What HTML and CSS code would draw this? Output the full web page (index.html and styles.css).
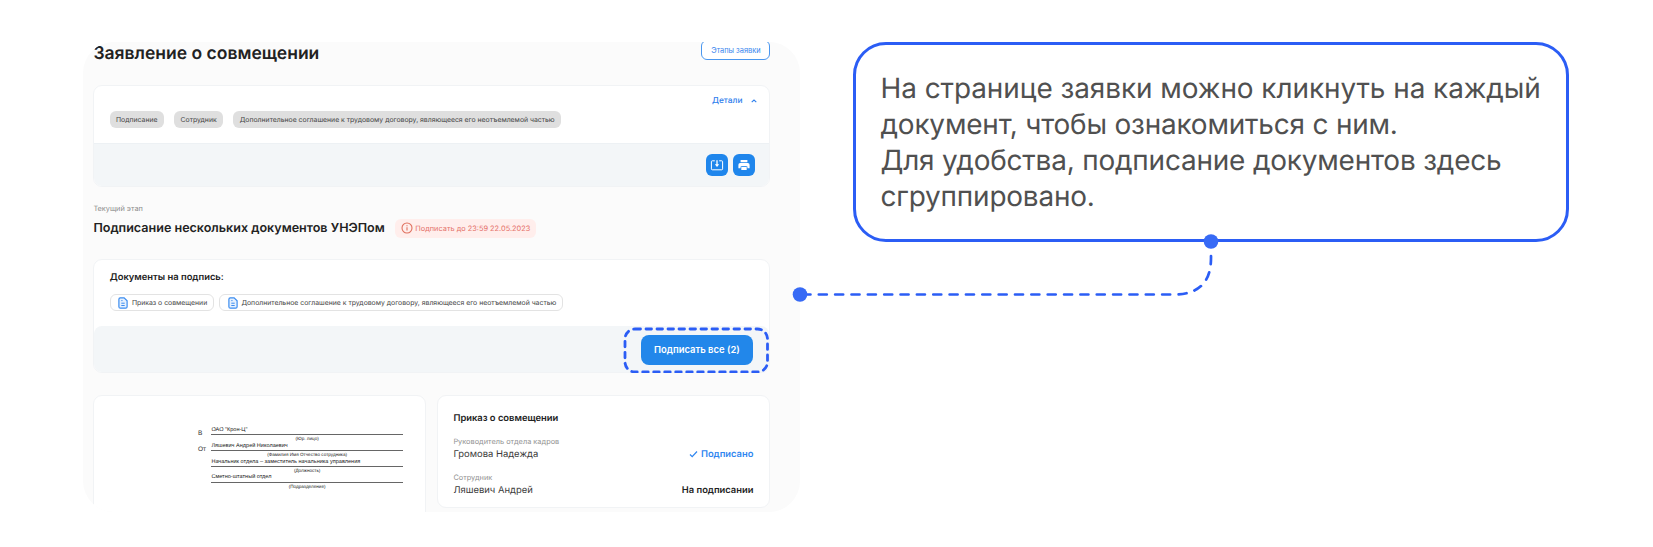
FILE: index.html
```html
<!DOCTYPE html>
<html lang="ru">
<head>
<meta charset="utf-8">
<title>Заявление о совмещении</title>
<link rel="stylesheet" href="styles.css">
</head>
<body>
<main class="stage">
  <section class="panel">
    <header class="header">
      <h1 class="title">Заявление о совмещении</h1>
      <button class="stages">Этапы заявки</button>
    </header>

    <article class="card info">
      <div class="details">Детали
        <svg class="chevron" viewBox="0 0 6 4"><path d="M.7 3.2 3 1l2.3 2.2"/></svg>
      </div>
      <div class="tags">
        <span class="tag">Подписание</span>
        <span class="tag">Сотрудник</span>
        <span class="tag">Дополнительное соглашение к трудовому договору, являющееся его неотъемлемой частью</span>
      </div>
      <footer class="bar info-bar">
        <button class="icon-btn">
          <svg viewBox="0 0 22 22"><path d="M8.800 6.800H6.300q-.9 0-.9.9v7.200q0 .9.9.9h9.400q.9 0 .9-.9V7.700q0-.9-.9-.9h-2.500" fill="none" stroke="#fff"/><path d="M11 6.200v5" fill="none" stroke="#fff" stroke-width="1.300"/><path d="M8.800 10.300h4.400L11 12.900z" fill="#fff"/></svg>
        </button>
        <button class="icon-btn">
          <svg viewBox="0 0 22 22"><path d="M7.600 6h6.800v2.300H7.600z" fill="#fff"/><path d="M7.200 9h7.600q1.800 0 1.800 1.800v3.400h-2.200v-1.700H7.600v1.700H5.400v-3.400Q5.400 9 7.200 9z" fill="#fff"/><path d="M8.300 12.800h5.400v3.300H8.300z" fill="#fff"/><path d="M8.300 12.500h5.400" stroke="#1f86ec" stroke-width=".8"/></svg>
        </button>
      </footer>
    </article>

    <div class="caption">Текущий этап</div>
    <div class="stage-row">
      <h2 class="stage-title">Подписание нескольких документов УНЭПом</h2>
      <span class="deadline">
        <svg class="alert" viewBox="0 0 12 12"><circle cx="6" cy="6" r="5"/><path d="M6 5.300v3.300M6 3.200v1.100"/></svg>
        Подписать до 23:59 22.05.2023
      </span>
    </div>

    <article class="card docs">
      <h3 class="subtitle docs-title">Документы на подпись:</h3>
      <div class="files">
        <span class="file">
          <svg class="file-icon" viewBox="0 0 10 12"><path d="M2.200.8h3.900l3 3v5.900q0 1.500-1.500 1.500H2.400Q.9 11.200.9 9.700V2.200Q.9.8 2.200.8z"/><path d="M3.300 3.600h1.200M3.300 6.200h3.400M3.300 8.500h3.400" stroke-width="1"/></svg>
          Приказ о совмещении
        </span>
        <span class="file">
          <svg class="file-icon" viewBox="0 0 10 12"><path d="M2.200.8h3.900l3 3v5.900q0 1.500-1.500 1.500H2.400Q.9 11.200.9 9.700V2.200Q.9.8 2.200.8z"/><path d="M3.300 3.600h1.200M3.300 6.200h3.400M3.300 8.500h3.400" stroke-width="1"/></svg>
          Дополнительное соглашение к трудовому договору, являющееся его неотъемлемой частью
        </span>
      </div>
      <footer class="bar docs-bar">
        <div class="sign-wrap">
          <button class="sign">Подписать все (2)</button>
          <svg class="highlight" viewBox="0 0 146 46"><rect x="2" y="2" width="142.500" height="43" rx="10"/></svg>
        </div>
      </footer>
    </article>

    <div class="columns">
      <article class="card paper">
        <div class="form">
          <span class="prep">В</span>
          <div class="field"><div class="value">ОАО "Крон-Ц"</div><div class="hint">(Юр. лицо)</div></div>
          <span class="prep">От</span>
          <div class="field"><div class="value">Ляшевич Андрей Николаевич</div><div class="hint">(Фамилия Имя Отчество сотрудника)</div></div>
          <span class="prep"></span>
          <div class="field"><div class="value">Начальник отдела – заместитель начальника управления</div><div class="hint">(Должность)</div></div>
          <span class="prep"></span>
          <div class="field"><div class="value">Сметно-штатный отдел</div><div class="hint">(Подразделение)</div></div>
        </div>
      </article>
      <article class="card signers">
        <h3 class="subtitle">Приказ о совмещении</h3>
        <div class="role">Руководитель отдела кадров</div>
        <div class="person"><span>Громова Надежда</span>
          <span class="done"><svg class="check" viewBox="0 0 9 8"><path d="M1 4.500 3.200 6.700 8 1.500"/></svg>Подписано</span></div>
        <div class="role">Сотрудник</div>
        <div class="person"><span>Ляшевич Андрей</span><span class="pending">На подписании</span></div>
      </article>
    </div>
  </section>

  <aside class="callout">
    <p class="note"><span class="lead">На странице заявки можно кликнуть на каждый</span><br>документ, чтобы ознакомиться с ним.<br>Для удобства, подписание документов здесь<br>сгруппировано.</p>
  </aside>

  <svg class="connector" viewBox="0 0 430 70">
    <path d="M421 24v2Q421 62.500 384 62.500H16"/>
    <circle cx="421" cy="9.500" r="7.300"/>
    <circle cx="10" cy="62.500" r="7.300"/>
  </svg>
</main>
</body>
</html>
```

FILE: styles.css
```css
* { box-sizing: border-box; }
body {
  margin: 0;
  background: #fff;
  color: #222;
  font-family: Inter, "Liberation Sans", sans-serif;
  text-rendering: geometricPrecision;
}
h1, h2, h3, p { margin: 0; font-weight: 600; }
button { padding: 0; font-family: inherit; }
svg { display: block; flex: none; }

.stage {
  position: relative;
  display: flex;
  align-items: flex-start;
  gap: 53px;
  height: 547px;
  padding: 42px 0 0 83px;
  overflow: hidden;
}
.panel {
  flex: none;
  width: 717px;
  height: 469.5px;
  padding: 0 29.6px 0 10.4px;
  border-radius: 31px;
  background: #fbfbfb;
  overflow: hidden;
}
.header { display: flex; justify-content: space-between; align-items: flex-start; height: 43.4px; }
.title { margin-top: 1px; font-size: 17.5px; line-height: 22px; white-space: nowrap; }
.stages {
  width: 69px;
  height: 20px;
  margin-top: -2px;
  border: 1.5px solid #4a97ef;
  border-radius: 6px;
  background: #fff;
  color: #3a86ee;
  font-size: 7.4px;
  line-height: 17px;
}

.card { border: 1px solid #f1f3f5; border-radius: 9px; background: #fff; overflow: hidden; }
.bar { display: flex; justify-content: flex-end; background: #f3f6f8; }
.info { height: 102px; }
.details {
  display: flex;
  justify-content: flex-end;
  align-items: center;
  gap: 8.5px;
  margin: 9px 12.5px 0 0;
  color: #2f80ed;
  font-size: 8.35px;
  font-weight: 500;
  line-height: 12px;
}
.chevron { width: 6px; height: 4px; fill: none; stroke: #2f80ed; stroke-width: 1.1; }
.tags { display: flex; gap: 10.4px; margin: 3.3px 0 0 15.3px; }
.tag {
  height: 17.5px;
  padding: 0 6.3px;
  border-radius: 6px;
  background: #dfdfdf;
  color: #444;
  font-size: 6.87px;
  line-height: 17.5px;
  white-space: nowrap;
}
.info-bar { gap: 5px; height: 44px; margin-top: 15.2px; padding: 10px 14.7px 0 0; border-top: 1px solid #edf1f4; }
.icon-btn { width: 22px; height: 22px; border: 0; border-radius: 6px; background: #1f86ec; }
.icon-btn svg { width: 22px; height: 22px; }

.caption { margin-top: 16.5px; color: #8b8b8b; font-size: 7.35px; line-height: 10px; }
.stage-row { display: flex; align-items: center; gap: 10.5px; height: 19px; margin-top: 5px; }
.stage-title { padding-top: 1px; font-size: 12.56px; line-height: 19px; white-space: nowrap; }
.deadline {
  display: flex;
  align-items: center;
  gap: 2px;
  width: 141px;
  height: 19px;
  padding-left: 6px;
  border-radius: 6px;
  background: #ffeeec;
  color: #e5716a;
  font-size: 7.38px;
  white-space: nowrap;
}
.alert { width: 12px; height: 12px; fill: none; stroke: #e0715f; stroke-width: 1.1; }

.docs { height: 114px; margin-top: 21.5px; overflow: visible; }
.subtitle { font-size: 9.4px; line-height: 12px; }
.docs-title { margin: 11.5px 0 0 15.3px; }
.files { display: flex; gap: 5px; margin: 10px 0 0 15.3px; }
.file {
  display: flex;
  align-items: center;
  gap: 3.5px;
  height: 17.5px;
  padding: 0 6px 0 7.7px;
  border: 1px solid #e3e3e3;
  border-radius: 6px;
  color: #444;
  font-size: 6.87px;
  white-space: nowrap;
}
.file-icon { width: 10px; height: 12px; fill: #e6f1fe; stroke: #3b8cf0; stroke-width: 1.2; }
.docs-bar { height: 46px; margin-top: 15px; padding: 8.5px 16.5px 0 0; border-radius: 8px; }
.sign-wrap { position: relative; width: 112px; height: 30px; }
.sign {
  width: 112px;
  height: 30px;
  border: 0;
  border-radius: 8px;
  background: #2287ea;
  color: #fff;
  font-size: 9.45px;
  font-weight: 600;
  line-height: 30px;
}
.highlight {
  position: absolute;
  left: -18px;
  top: -7.5px;
  width: 146px;
  height: 46px;
  fill: none;
  stroke: #2b5df5;
  stroke-width: 2.8;
  stroke-linecap: round;
  stroke-dasharray: 5.5 5.5;
}

.columns { display: grid; grid-template-columns: 333px 333px; gap: 10.5px; align-items: start; margin-top: 21.3px; }
.paper { height: 140px; padding: 31.3px 0 0 103.5px; font-family: "Liberation Sans", sans-serif; }
.form { display: grid; grid-template-columns: 13.5px 191.5px; grid-auto-rows: 15.8px; }
.prep { font-size: 6.5px; line-height: 13.5px; color: #333; }
.value { height: 8.5px; border-bottom: 1px solid #666; font-size: 5.56px; line-height: 6.5px; white-space: nowrap; color: #222; }
.hint { font-size: 4.63px; line-height: 7px; text-align: center; white-space: nowrap; color: #222; }
.signers { height: 113px; padding: 17px 15.5px 0; }
.role { color: #939393; font-size: 7.38px; line-height: 9px; }
.signers .subtitle + .role { margin-top: 12px; }
.person { display: flex; justify-content: space-between; height: 13px; margin-top: 2.2px; color: #3c3c3c; font-size: 9.44px; line-height: 13px; }
.person + .role { margin-top: 12px; }
.done { display: flex; align-items: center; gap: 3px; color: #2f86f0; font-size: 9.35px; font-weight: 600; }
.check { width: 9px; height: 8px; fill: none; stroke: #2f86f0; stroke-width: 1.2; }
.pending { color: #222; font-size: 9.35px; font-weight: 600; }

.callout {
  flex: none;
  width: 716px;
  height: 200px;
  padding: 24.5px 0 0 24.5px;
  border: 3px solid #2b5df5;
  border-radius: 33px;
}
.note { color: #505050; font-size: 27.95px; font-weight: 400; line-height: 36.1px; letter-spacing: -.19px; white-space: nowrap; }
.lead { letter-spacing: -.06px; }

.connector { position: absolute; left: 790px; top: 232.2px; width: 430px; height: 70px; }
.connector path { fill: none; stroke: #2b5df5; stroke-width: 2.7; stroke-linecap: round; stroke-dasharray: 8 8.35; }
.connector circle { fill: #376af5; }
```
